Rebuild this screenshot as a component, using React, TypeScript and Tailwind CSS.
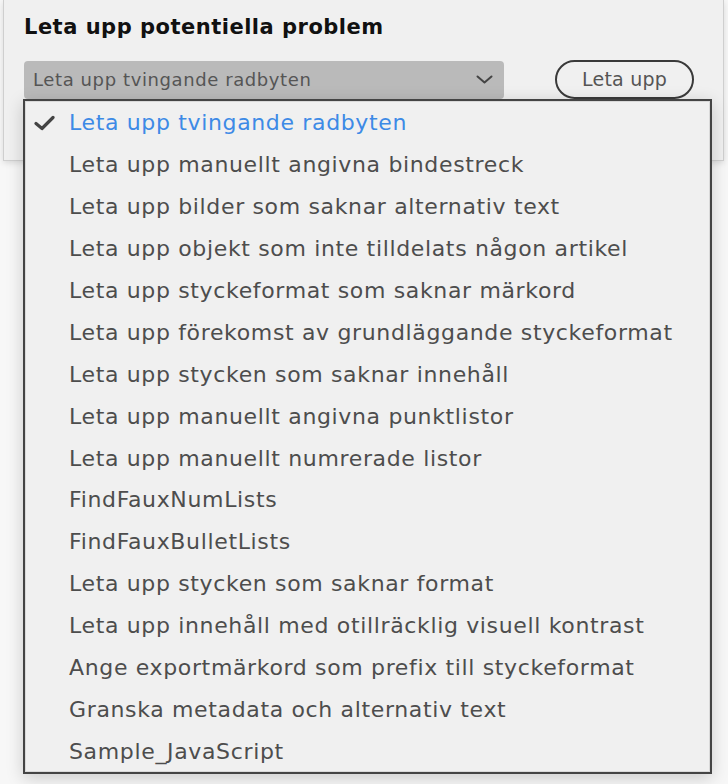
const items = [
  'Leta upp tvingande radbyten',
  'Leta upp manuellt angivna bindestreck',
  'Leta upp bilder som saknar alternativ text',
  'Leta upp objekt som inte tilldelats någon artikel',
  'Leta upp styckeformat som saknar märkord',
  'Leta upp förekomst av grundläggande styckeformat',
  'Leta upp stycken som saknar innehåll',
  'Leta upp manuellt angivna punktlistor',
  'Leta upp manuellt numrerade listor',
  'FindFauxNumLists',
  'FindFauxBulletLists',
  'Leta upp stycken som saknar format',
  'Leta upp innehåll med otillräcklig visuell kontrast',
  'Ange exportmärkord som prefix till styckeformat',
  'Granska metadata och alternativ text',
  'Sample_JavaScript',
];

const font = { fontFamily: '"DejaVu Sans", "Liberation Sans", sans-serif' };

const CheckIcon = () => (
  <svg width="22" height="16" viewBox="0 0 22 16" fill="none">
    <path d="M2 8.5 L8 13.5 L19 2.5" stroke="#444" strokeWidth="3.2" strokeLinecap="round" strokeLinejoin="round" />
  </svg>
);

const ChevronIcon = () => (
  <svg width="17" height="9" viewBox="0 0 17 9" fill="none">
    <path d="M1.5 1.5 L8.5 7.5 L15.5 1.5" stroke="#444" strokeWidth="2" strokeLinecap="round" strokeLinejoin="round" />
  </svg>
);

export default function App() {
  const selected = 0;

  return (
    <div className="relative w-[728px] h-[784px] overflow-hidden bg-[#f7f7f7]" style={font}>
      <div className="ml-[3px] w-[721px] h-[161px] bg-[#f0f0f0] border-x border-b border-[#cfcfcf] shadow-[0_2px_6px_rgba(0,0,0,0.12)] pl-[20px] pt-[13px]">
        <h2 className="text-[21px] leading-[28px] font-bold text-[#111] tracking-[0.5px]">
          Leta upp potentiella problem
        </h2>
        <div className="mt-[19px] flex items-center">
          <div className="w-[480px] h-[38px] rounded-[4px] bg-[#bababa] flex items-center justify-between pl-[9px] pr-[11px]">
            <span className="text-[18px] tracking-[0.6px] text-[#555]">Leta upp tvingande radbyten</span>
            <ChevronIcon />
          </div>
          <button
            type="button"
            className="ml-[51px] w-[139px] h-[39px] rounded-full border-2 border-[#3a3a3a] text-[19px] tracking-[0.2px] text-[#555] flex items-center justify-center"
          >
            Leta upp
          </button>
        </div>
      </div>

      <div className="absolute left-[23px] top-[99px] w-[689px] h-[675px] bg-[#f0f0f0] border-2 border-[#444] shadow-[inset_0_0_0_1px_#d9d9d9,0_4px_16px_rgba(0,0,0,0.18)] pt-[1px]">
        {items.map((label, i) => (
          <div key={label} className="h-[41.9px] flex items-center">
            <div className="w-[44px] pl-[9px]">
              {i === selected && <CheckIcon />}
            </div>
            <span
              className={
                i === selected
                  ? 'text-[22px] tracking-[0.65px] text-[#3d8ae6]'
                  : 'text-[22px] tracking-[0.65px] text-[#4d4d4d]'
              }
            >
              {label}
            </span>
          </div>
        ))}
      </div>
    </div>
  );
}
